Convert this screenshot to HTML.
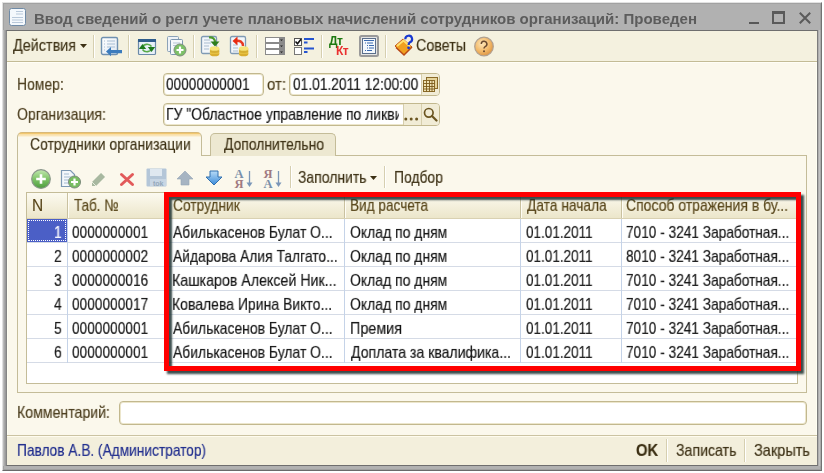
<!DOCTYPE html>
<html><head><meta charset="utf-8">
<style>
*{margin:0;padding:0;box-sizing:border-box}
html,body{width:824px;height:473px;overflow:hidden;background:#fff;position:relative;font-family:"Liberation Sans",sans-serif}
.a{position:absolute}
.t{position:absolute;font-size:15.5px;line-height:18px;transform-origin:0 14px;white-space:nowrap;color:#4a3c1c;will-change:transform}
.k{color:#1e1e1e}
.hd{color:#5a4818}
.box{position:absolute;background:#fff;border:1px solid #c2b88e;border-radius:4px;box-shadow:inset 0 0 0 1px #ece6cc}
.sep{position:absolute;width:1px;background:#d6cfb0;box-shadow:1px 0 0 #fff}
.vl{position:absolute;width:1px;background:#c5d3e8}
.hl{position:absolute;height:1px;background:#d5dbe6}
</style></head><body>
<!-- window frame -->
<div class="a" style="left:2px;top:2px;width:820px;height:469px;background:#b1b1b1;border-top:1px solid #e2e2e2;border-left:1px solid #e0e0e0;border-right:1px solid #727272;border-bottom:1px solid #6a6a6a;box-shadow:inset 1px 1px 0 #a2a2a2, inset -1px -1px 0 #a0a0a0"></div>
<div class="a" style="left:3px;top:30px;width:3px;height:436px;background:linear-gradient(to right,#c4c4c4,#a8a8a8,#939393)"></div>
<div class="a" style="left:818px;top:30px;width:3px;height:436px;background:linear-gradient(to right,#a4a4a4,#c2c2c2,#a0a0a0)"></div>
<!-- title icon -->
<svg class="a" style="left:9px;top:8px" width="17" height="18" viewBox="0 0 17 18">
<rect x="0.5" y="0.5" width="16" height="17" rx="2" fill="#f4f8fc" stroke="#6f8aa6"/>
<path d="M7 3.5h7M7 6h7M3 9.5h11M3 12h11M3 14.5h11" stroke="#b8c8da" stroke-width="1"/>
</svg>
<div class="a" style="left:34px;top:9.5px;font-size:15px;line-height:17px;font-weight:bold;color:#5c5c5c;white-space:nowrap;transform:scaleX(1.002);transform-origin:0 0;will-change:transform">Ввод сведений о регл учете плановых начислений сотрудников организаций: Проведен</div>
<!-- window buttons -->
<div class="a" style="left:749px;top:22px;width:10px;height:2px;background:#585858"></div>
<div class="a" style="left:772px;top:11px;width:13px;height:13px;border:2px solid #5a5a5a;border-top-width:3px"></div>
<svg class="a" style="left:798px;top:11px" width="14" height="14" viewBox="0 0 14 14"><path d="M1.8 1.8L12.2 12.2M12.2 1.8L1.8 12.2" stroke="#5a5a5a" stroke-width="2"/></svg>

<!-- client area -->
<div class="a" style="left:6px;top:30px;width:812px;height:436px;background:#fbf8ec;border:1px solid #6e6e6e;border-left-color:#858585;border-right-color:#7c7c7c;box-shadow:inset 1px 0 0 #fffff2, inset -1px 0 0 #fffff2"></div>
<!-- toolbar -->
<div class="a" style="left:7px;top:31px;width:810px;height:31px;background:#f4f1df;border-bottom:1px solid #c3bb95"></div>
<div class="a" style="left:7px;top:62px;width:810px;height:1px;background:#fffef6"></div>

<svg class="a" style="left:80px;top:44px" width="8" height="5"><path d="M0 0h7L3.5 4z" fill="#3c3014"/></svg>
<div class="sep" style="left:93px;top:35px;height:23px"></div>
<div class="sep" style="left:128px;top:35px;height:23px"></div>
<div class="sep" style="left:193px;top:35px;height:23px"></div>
<div class="sep" style="left:256px;top:35px;height:23px"></div>
<div class="sep" style="left:321px;top:35px;height:23px"></div>
<div class="sep" style="left:385px;top:35px;height:23px"></div>
<svg class="a" style="left:100px;top:36px" width="24" height="21" viewBox="0 0 24 21">
<defs><linearGradient id="dg" x1="0" y1="0" x2="1" y2="1"><stop offset="0" stop-color="#fff"/><stop offset="1" stop-color="#dfe8f2"/></linearGradient></defs>
<rect x="1.5" y="1.5" width="16" height="17" rx="1.5" fill="url(#dg)" stroke="#6f90b0" stroke-width="1.4"/>
<path d="M4 5h1M7 5h8M4 8h1M7 8h8M4 11h1M7 11h8M4 14h1" stroke="#a8bdd4" stroke-width="1.2"/>
<path d="M6 15.5L11 11v3h11v3.2H11v3z" fill="#3b7bbd"/>
</svg>
<svg class="a" style="left:137px;top:38px" width="20" height="18" viewBox="0 0 20 18">
<rect x="1.5" y="1.5" width="17" height="15" rx="1" fill="#e8f0f8" stroke="#6b8aa8" stroke-width="1.2"/>
<rect x="1" y="1" width="18" height="3" fill="#2f5d8c"/>
<path d="M5.5 9.5C6 6 12 5 14.5 8.5" fill="none" stroke="#58aa48" stroke-width="1.6"/>
<path d="M14.5 10.5C14 14 8 15 5.5 11.5" fill="none" stroke="#58aa48" stroke-width="1.6"/>
<path d="M1.8 11h7.4L5.5 6z" fill="#1f7a1f"/><path d="M10.8 9h7.4l-3.7 5z" fill="#1f7a1f"/>
</svg>
<svg class="a" style="left:166px;top:35px" width="21" height="22" viewBox="0 0 21 22">
<rect x="1.5" y="1.5" width="11" height="15" rx="1" fill="#eef2f7" stroke="#8ca2b8"/>
<rect x="4.5" y="4.5" width="12" height="15" rx="1" fill="#f6f8fb" stroke="#7c96b0"/>
<path d="M7 8h7M7 10.5h7" stroke="#b5c5d5"/>
<circle cx="14" cy="15" r="6" fill="#7cc066" stroke="#7d8f7d" stroke-width="1"/>
<path d="M14 11.5v7M10.5 15h7" stroke="#fff" stroke-width="2.2"/>
</svg>
<svg class="a" style="left:200px;top:35px" width="21" height="22" viewBox="0 0 21 22">
<rect x="1.5" y="1.5" width="15" height="17" rx="1.5" fill="#f2f6fa" stroke="#7f9ab4" stroke-width="1.3"/>
<path d="M4 5h6M4 8h7M4 11h5M4 14h5" stroke="#a9bccf"/>
<path d="M9 2.5c4 -0.5 6 1.5 6 5" fill="none" stroke="#4d9a2a" stroke-width="2.2"/>
<path d="M10.5 6.5h9l-4.5 5z" fill="#2c7d1c"/>
<ellipse cx="14.6" cy="19" rx="4.7" ry="2.3" fill="#d9ae30"/>
<rect x="9.9" y="13.5" width="9.4" height="5.5" fill="#e6c040"/>
<ellipse cx="14.6" cy="16.3" rx="4.7" ry="1.6" fill="#c9a22a" opacity=".6"/>
<ellipse cx="14.6" cy="13.5" rx="4.7" ry="2.3" fill="#f6e47a"/>
</svg>
<svg class="a" style="left:229px;top:35px" width="21" height="22" viewBox="0 0 21 22">
<rect x="1.5" y="1.5" width="15" height="17" rx="1.5" fill="#f2f6fa" stroke="#7f9ab4" stroke-width="1.3"/>
<path d="M4 10h4M4 13h5M4 16h5" stroke="#a9bccf"/>
<path d="M6 6c5-1 8 1 8 5" fill="none" stroke="#e83a20" stroke-width="2.4"/>
<path d="M3.5 6L8.5 1.5v9z" fill="#e82a10"/>
<ellipse cx="14.6" cy="19" rx="4.7" ry="2.3" fill="#d9ae30"/>
<rect x="9.9" y="13.5" width="9.4" height="5.5" fill="#e6c040"/>
<ellipse cx="14.6" cy="16.3" rx="4.7" ry="1.6" fill="#c9a22a" opacity=".6"/>
<ellipse cx="14.6" cy="13.5" rx="4.7" ry="2.3" fill="#f6e47a"/>
</svg>
<svg class="a" style="left:264px;top:36px" width="22" height="20" viewBox="0 0 22 20">
<g stroke="#8a8a8a" stroke-width="1"><rect x="1.5" y="1.5" width="19" height="5" fill="#fff"/><rect x="1.5" y="7.5" width="19" height="5" fill="#fff"/><rect x="1.5" y="13.5" width="19" height="5" fill="#fff"/></g>
<rect x="15" y="2" width="5" height="4" fill="#8c8c8c"/><rect x="15" y="8" width="5" height="4" fill="#8c8c8c"/><rect x="15" y="14" width="5" height="4" fill="#8c8c8c"/>
<path d="M16 3.5h3l-1.5 1.5zM16 9.5h3l-1.5 1.5zM16 15.5h3l-1.5 1.5z" fill="#222"/>
</svg>
<svg class="a" style="left:293px;top:36px" width="22" height="20" viewBox="0 0 22 20">
<rect x="1.5" y="2.5" width="7" height="7" fill="#fff" stroke="#555"/>
<path d="M2.5 5.5l2 2.2 3.5-4.5" fill="none" stroke="#111" stroke-width="1.6"/>
<rect x="1.5" y="11.5" width="7" height="7" fill="#fff" stroke="#777"/>
<path d="M11 3h10M11 6.5h3.5M11 12.5h10M11 16h3.5" stroke="#2554d0" stroke-width="2"/>
</svg>
<div class="a" style="left:329px;top:35px;font:bold 12px/12px 'Liberation Sans',sans-serif;color:#1e7a12;letter-spacing:-0.6px;will-change:transform">Дт</div>
<div class="a" style="left:336px;top:45px;font:bold 12px/12px 'Liberation Sans',sans-serif;color:#ea3030;letter-spacing:-0.6px;will-change:transform">Кт</div>
<svg class="a" style="left:359px;top:35px" width="20" height="22" viewBox="0 0 20 22">
<rect x="1" y="1" width="18" height="20" rx="1.5" fill="#e4e4e4" stroke="#9a9a9a" stroke-width="2"/>
<rect x="3.5" y="3.5" width="13" height="15" fill="#f4f8fc" stroke="#5b6f8c"/>
<path d="M5 5.5h10M6 8h1M8 8h6M8 10.5h1M10 10.5h5M8 13h1M10 13h5M6 15.5h1M8 15.5h5" stroke="#3a6ab0" stroke-width="1.2"/>
</svg>
<svg class="a" style="left:393px;top:34px" width="22" height="23" viewBox="0 0 22 23">
<path d="M2 12L10 5l9 8-8 8z" fill="#f0a020" stroke="#c0501a" stroke-width="1"/>
<path d="M3 13.5L11 21l8-8" fill="none" stroke="#b84818" stroke-width="1.5"/>
<path d="M4 12l6.5-5.5 6.5 6" fill="none" stroke="#ffe070" stroke-width="2"/>
<path d="M12.3 5.2a3.4 3.4 0 1 1 4.6 3.1c-1 .6-1.3 1.3-1.3 2.6" fill="none" stroke="#1838d0" stroke-width="2.2"/>
<circle cx="15.6" cy="13.8" r="1.4" fill="#1838d0"/>
</svg>
<svg class="a" style="left:473px;top:36px" width="22" height="21" viewBox="0 0 22 21">
<defs><radialGradient id="hg" cx=".4" cy=".35" r=".7"><stop offset="0" stop-color="#fde6b8"/><stop offset=".6" stop-color="#f2b868"/><stop offset="1" stop-color="#d99040"/></radialGradient></defs>
<circle cx="11" cy="10.5" r="9.3" fill="url(#hg)" stroke="#b0a090" stroke-width="1.2"/>
<path d="M8.3 8a2.8 2.8 0 1 1 3.9 2.6c-.8.5-1.2 1-1.2 2" fill="none" stroke="#6a4a30" stroke-width="1.5"/>
<circle cx="11" cy="15.3" r="1" fill="#6a4a30"/>
</svg>

<!-- footer -->
<div class="a" style="left:7px;top:435px;width:810px;height:1px;background:#cbc3a2"></div>
<div class="a" style="left:7px;top:436px;width:810px;height:29px;background:#f3efdc;border-top:1px solid #fffcee"></div>
<div class="sep" style="left:666px;top:439px;height:23px"></div>
<div class="sep" style="left:744px;top:439px;height:23px"></div>

<!-- form fields -->
<div class="box" style="left:163px;top:73px;width:101px;height:23px"></div>
<div class="box" style="left:289px;top:73px;width:151px;height:23px;overflow:hidden"><div class="a" style="left:131px;top:0;width:19px;height:21px;background:#f1ecd6;border-left:1px solid #d6ceac"></div></div>
<svg class="a" style="left:423px;top:77px" width="15" height="15" viewBox="0 0 15 15">
<rect x="3.5" y="0.5" width="11" height="11" fill="#e6d49a" stroke="#8a6a28"/>
<rect x="0.5" y="3.5" width="11" height="11" fill="#efe2b4" stroke="#8a6a28"/>
<path d="M0.5 6.5h11M0.5 9.5h11M0.5 12h11M3.5 3.5v11M6.5 3.5v11M9 3.5v11" stroke="#7a5a18" stroke-width=".9"/>
</svg>

<div class="box" style="left:163px;top:103px;width:277px;height:23px;overflow:hidden">
<div class="a" style="left:239px;top:0;width:18px;height:21px;background:#f1ecd6;border-left:1px solid #d6ceac"></div>
<div class="a" style="left:257px;top:0;width:19px;height:21px;background:#f1ecd6;border-left:1px solid #d6ceac"></div>
</div>
<svg class="a" style="left:404px;top:117px" width="15" height="4"><circle cx="1.8" cy="2" r="1.5" fill="#6a5420"/><circle cx="7.2" cy="2" r="1.5" fill="#6a5420"/><circle cx="12.6" cy="2" r="1.5" fill="#6a5420"/></svg>
<svg class="a" style="left:423px;top:107px" width="15" height="15" viewBox="0 0 15 15"><circle cx="5.8" cy="5.8" r="4.3" fill="none" stroke="#6a5420" stroke-width="1.7"/><path d="M9 9l4.5 4.5" stroke="#6a5420" stroke-width="2.2" stroke-linecap="round"/></svg>
<div class="a" style="left:164px;top:104px;width:235px;height:21px;overflow:hidden"><div class="t" style="left:2.40px;top:2.20px;color:#141414;transform:scale(0.9,1.08);-webkit-text-stroke:0.15px #141414">ГУ &quot;Областное управление по ликвидации</div></div>


<!-- tabs panel -->
<div class="a" style="left:17px;top:155px;width:790px;height:238px;border:1px solid #c4bc98"></div>
<div class="a" style="left:210px;top:133px;width:126px;height:23px;background:#ede8d1;border:1px solid #c4bc98;border-bottom:none;border-radius:5px 5px 0 0"></div>
<div class="a" style="left:17px;top:132px;width:185px;height:24px;background:linear-gradient(#f2c870 0,#f2c870 1px,#f8dca0 1px,#fae8c0 3px,#fbf8ec 4px);border:1px solid #c4bc98;border-bottom:none;border-top-color:#d8b878;border-radius:5px 5px 0 0"></div>

<svg class="a" style="left:30px;top:168px" width="22" height="22" viewBox="0 0 22 22">
<defs><linearGradient id="gg" x1="0" y1="0" x2="0" y2="1"><stop offset="0" stop-color="#c2e8b0"/><stop offset=".5" stop-color="#80c468"/><stop offset="1" stop-color="#4d9c3e"/></linearGradient></defs>
<circle cx="11" cy="11" r="9.3" fill="url(#gg)" stroke="#8a968a" stroke-width="1.2"/>
<path d="M11 6.2v9.6M6.2 11h9.6" stroke="#fff" stroke-width="2.6"/>
</svg>
<svg class="a" style="left:60px;top:169px" width="22" height="20" viewBox="0 0 22 20">
<path d="M1.5 1.5h9l4 4v12h-13z" fill="#f4f7fb" stroke="#7d98b4" stroke-width="1.2"/>
<path d="M4 5h5M4 8h7M4 11h5M4 14h4" stroke="#a5bad0"/>
<circle cx="14.5" cy="13" r="6" fill="#78bd62" stroke="#7a8a7a"/>
<path d="M14.5 9.5v7M11 13h7" stroke="#fff" stroke-width="2.2"/>
</svg>
<svg class="a" style="left:90px;top:171px" width="17" height="16" viewBox="0 0 17 16">
<path d="M2 11L11 2l4 4-9 9H2z" fill="#a8b8a0"/>
<path d="M2 11l4 4" stroke="#e8eee0" stroke-width="1"/>
<path d="M11 2l4 4" stroke="#c8d4c0" stroke-width="1"/>
</svg>
<svg class="a" style="left:119px;top:172px" width="16" height="15" viewBox="0 0 16 15">
<path d="M2.5 2.5l11 10M13.5 2.5l-11 10" stroke="#e25a5a" stroke-width="3" stroke-linecap="round"/>
</svg>
<svg class="a" style="left:146px;top:168px" width="21" height="19" viewBox="0 0 21 19">
<rect x="0.5" y="0.5" width="20" height="18" rx="1" fill="#b4c6d8"/>
<rect x="4" y="1" width="12" height="7" fill="#dfe8f0"/>
<rect x="4" y="11" width="16" height="7" fill="#c8d6e4"/>
<text x="7" y="18" font-family="Liberation Sans" font-size="7" font-weight="bold" fill="#95a8ba">tok</text>
</svg>
<svg class="a" style="left:176px;top:170px" width="18" height="16" viewBox="0 0 18 16">
<path d="M9 1L17 9h-4v6H5V9H1z" fill="#a6b4c2" stroke="#95a5b5" stroke-width=".6"/>
</svg>
<svg class="a" style="left:205px;top:170px" width="18" height="16" viewBox="0 0 18 16">
<defs><linearGradient id="bg2" x1="0" y1="0" x2="0" y2="1"><stop offset="0" stop-color="#b8dcf8"/><stop offset="1" stop-color="#3a8ad8"/></linearGradient></defs>
<path d="M5 1h8v6h4L9 15 1 7h4z" fill="url(#bg2)" stroke="#3070b0" stroke-width="1"/>
</svg>
<svg class="a" style="left:234px;top:169px" width="20" height="20" viewBox="0 0 20 20">
<text x="0.5" y="8.8" font-family="Liberation Serif" font-size="12.5" font-weight="bold" fill="#7a90aa">A</text>
<text x="0.5" y="19" font-family="Liberation Serif" font-size="12.5" font-weight="bold" fill="#a07a82">Я</text>
<path d="M15.5 2v13" stroke="#7a96b8" stroke-width="1.3"/><path d="M12.5 13.5h6l-3 4.5z" fill="#7a96b8"/>
</svg>
<svg class="a" style="left:263px;top:169px" width="20" height="20" viewBox="0 0 20 20">
<text x="0.5" y="8.8" font-family="Liberation Serif" font-size="12.5" font-weight="bold" fill="#a07a82">Я</text>
<text x="0.5" y="19" font-family="Liberation Serif" font-size="12.5" font-weight="bold" fill="#7a90aa">A</text>
<path d="M15.5 2v13" stroke="#7a96b8" stroke-width="1.3"/><path d="M12.5 13.5h6l-3 4.5z" fill="#7a96b8"/>
</svg>
<svg class="a" style="left:370px;top:176px" width="8" height="5"><path d="M0 0h7L3.5 4z" fill="#3c3014"/></svg>
<div class="sep" style="left:290px;top:166px;height:22px"></div>
<div class="sep" style="left:384px;top:166px;height:22px"></div>

<!-- table -->
<div class="a" style="left:26px;top:192px;width:772px;height:192px;background:#fff;border:1px solid #c4bc98"></div>
<div class="a" style="left:27px;top:193px;width:770px;height:26px;background:linear-gradient(#fcfaf0,#ebe5c9)"></div>
<div class="a" style="left:27px;top:218px;width:770px;height:1px;background:#d9d1b2"></div>
<div class="a" style="left:67px;top:193px;width:1px;height:25px;background:#c9c1a0"></div>
<div class="a" style="left:68px;top:193px;width:1px;height:25px;background:#fffdf5"></div>
<div class="a" style="left:167px;top:193px;width:1px;height:25px;background:#c9c1a0"></div>
<div class="a" style="left:168px;top:193px;width:1px;height:25px;background:#fffdf5"></div>
<div class="a" style="left:344px;top:193px;width:1px;height:25px;background:#c9c1a0"></div>
<div class="a" style="left:345px;top:193px;width:1px;height:25px;background:#fffdf5"></div>
<div class="a" style="left:520px;top:193px;width:1px;height:25px;background:#c9c1a0"></div>
<div class="a" style="left:521px;top:193px;width:1px;height:25px;background:#fffdf5"></div>
<div class="a" style="left:621px;top:193px;width:1px;height:25px;background:#c9c1a0"></div>
<div class="a" style="left:622px;top:193px;width:1px;height:25px;background:#fffdf5"></div>
<div class="hl" style="left:27px;top:242px;width:770px"></div>
<div class="hl" style="left:27px;top:266px;width:770px"></div>
<div class="hl" style="left:27px;top:290px;width:770px"></div>
<div class="hl" style="left:27px;top:314px;width:770px"></div>
<div class="hl" style="left:27px;top:338px;width:770px"></div>
<div class="hl" style="left:27px;top:362px;width:770px"></div>
<div class="vl" style="left:67px;top:219px;height:144px"></div>
<div class="vl" style="left:167px;top:219px;height:144px"></div>
<div class="vl" style="left:344px;top:219px;height:144px"></div>
<div class="vl" style="left:520px;top:219px;height:144px"></div>
<div class="vl" style="left:621px;top:219px;height:144px"></div>
<div class="a" style="left:27px;top:219px;width:40px;height:23px;background:#4b5fc6;outline:1px dotted #fff;outline-offset:-2px"></div>
<div class="t" style="left:13.10px;top:37.00px;color:#3c3014;font-weight:400;transform:scale(0.9284,1.08);-webkit-text-stroke:0.15px #3c3014;">Действия</div>
<div class="t" style="left:416.08px;top:36.50px;color:#3c3014;font-weight:400;transform:scale(0.9231,1.08);-webkit-text-stroke:0.15px #3c3014;">Советы</div>
<div class="t" style="left:17.10px;top:76.00px;color:#4a3c1c;font-weight:400;transform:scale(0.9000,1.08);-webkit-text-stroke:0.15px #4a3c1c;">Номер:</div>
<div class="t" style="left:166.42px;top:76.00px;color:#141414;font-weight:400;transform:scale(0.8817,1.08);-webkit-text-stroke:0.15px #141414;">00000000001</div>
<div class="t" style="left:267.44px;top:76.00px;color:#4a3c1c;font-weight:400;transform:scale(0.9647,1.08);-webkit-text-stroke:0.15px #4a3c1c;">от:</div>
<div class="t" style="left:292.51px;top:76.00px;color:#141414;font-weight:400;transform:scale(0.8879,1.08);-webkit-text-stroke:0.15px #141414;">01.01.2011 12:00:00</div>
<div class="t" style="left:16.59px;top:106.20px;color:#4a3c1c;font-weight:400;transform:scale(0.9095,1.08);-webkit-text-stroke:0.15px #4a3c1c;">Организация:</div>
<div class="t" style="left:29.80px;top:135.50px;color:#3c3014;font-weight:400;transform:scale(0.9000,1.08);-webkit-text-stroke:0.15px #3c3014;">Сотрудники организации</div>
<div class="t" style="left:223.80px;top:135.50px;color:#3c3014;font-weight:400;transform:scale(0.8964,1.08);-webkit-text-stroke:0.15px #3c3014;">Дополнительно</div>
<div class="t" style="left:298.10px;top:169.00px;color:#3c3014;font-weight:400;transform:scale(0.9000,1.08);-webkit-text-stroke:0.15px #3c3014;">Заполнить</div>
<div class="t" style="left:393.50px;top:169.00px;color:#3c3014;font-weight:400;transform:scale(0.8962,1.08);-webkit-text-stroke:0.15px #3c3014;">Подбор</div>
<div class="t" style="left:31.70px;top:197.10px;color:#58461a;font-weight:400;transform:scale(1.0000,1.08);-webkit-text-stroke:0.15px #58461a;">N</div>
<div class="t" style="left:74.00px;top:197.10px;color:#58461a;font-weight:400;transform:scale(0.8627,1.08);-webkit-text-stroke:0.15px #58461a;">Таб. №</div>
<div class="t" style="left:173.11px;top:197.10px;color:#58461a;font-weight:400;transform:scale(0.8878,1.08);-webkit-text-stroke:0.15px #58461a;">Сотрудник</div>
<div class="t" style="left:349.62px;top:197.10px;color:#58461a;font-weight:400;transform:scale(0.8784,1.08);-webkit-text-stroke:0.15px #58461a;">Вид расчета</div>
<div class="t" style="left:527.20px;top:197.10px;color:#58461a;font-weight:400;transform:scale(0.8867,1.08);-webkit-text-stroke:0.15px #58461a;">Дата начала</div>
<div class="t" style="left:626.40px;top:197.10px;color:#58461a;font-weight:400;transform:scale(0.9023,1.08);-webkit-text-stroke:0.15px #58461a;">Способ отражения в бу...</div>
<div class="t" style="left:16.59px;top:404.00px;color:#4a3c1c;font-weight:400;transform:scale(0.9121,1.08);-webkit-text-stroke:0.15px #4a3c1c;">Комментарий:</div>
<div class="t" style="left:16.62px;top:442.00px;color:#1c2a8c;font-weight:400;transform:scale(0.8844,1.08);-webkit-text-stroke:0.15px #1c2a8c;">Павлов А.В. (Администратор)</div>
<div class="t" style="left:636.35px;top:442.00px;color:#3a2e12;font-weight:700;transform:scale(0.9545,1.08);-webkit-text-stroke:0.15px #3a2e12;">OK</div>
<div class="t" style="left:676.09px;top:442.00px;color:#3a2e12;font-weight:400;transform:scale(0.9123,1.08);-webkit-text-stroke:0.15px #3a2e12;">Записать</div>
<div class="t" style="left:754.06px;top:442.00px;color:#3a2e12;font-weight:400;transform:scale(0.9379,1.08);-webkit-text-stroke:0.15px #3a2e12;">Закрыть</div>
<div class="t" style="left:71.92px;top:223.50px;color:#141414;font-weight:400;transform:scale(0.8845,1.08);-webkit-text-stroke:0.15px #141414;">0000000001</div>
<div class="t" style="left:173.00px;top:223.50px;color:#141414;font-weight:400;transform:scale(0.8977,1.08);-webkit-text-stroke:0.15px #141414;">Абилькасенов Булат О...</div>
<div class="t" style="left:349.60px;top:223.50px;color:#141414;font-weight:400;transform:scale(0.9009,1.08);-webkit-text-stroke:0.15px #141414;">Оклад по дням</div>
<div class="t" style="left:526.33px;top:223.50px;color:#141414;font-weight:400;transform:scale(0.8720,1.08);-webkit-text-stroke:0.15px #141414;">01.01.2011</div>
<div class="t" style="left:626.42px;top:223.50px;color:#141414;font-weight:400;transform:scale(0.8820,1.08);-webkit-text-stroke:0.15px #141414;">7010 - 3241 Заработная...</div>
<div class="t" style="left:71.92px;top:247.50px;color:#141414;font-weight:400;transform:scale(0.8845,1.08);-webkit-text-stroke:0.15px #141414;">0000000002</div>
<div class="t" style="left:173.00px;top:247.50px;color:#141414;font-weight:400;transform:scale(0.8945,1.08);-webkit-text-stroke:0.15px #141414;">Айдарова Алия Талгато...</div>
<div class="t" style="left:349.60px;top:247.50px;color:#141414;font-weight:400;transform:scale(0.9009,1.08);-webkit-text-stroke:0.15px #141414;">Оклад по дням</div>
<div class="t" style="left:526.33px;top:247.50px;color:#141414;font-weight:400;transform:scale(0.8720,1.08);-webkit-text-stroke:0.15px #141414;">01.01.2011</div>
<div class="t" style="left:626.42px;top:247.50px;color:#141414;font-weight:400;transform:scale(0.8820,1.08);-webkit-text-stroke:0.15px #141414;">8010 - 3241 Заработная...</div>
<div class="t" style="left:71.92px;top:271.50px;color:#141414;font-weight:400;transform:scale(0.8845,1.08);-webkit-text-stroke:0.15px #141414;">0000000016</div>
<div class="t" style="left:172.08px;top:271.50px;color:#141414;font-weight:400;transform:scale(0.9169,1.08);-webkit-text-stroke:0.15px #141414;">Кашкаров Алексей Ник...</div>
<div class="t" style="left:349.60px;top:271.50px;color:#141414;font-weight:400;transform:scale(0.9009,1.08);-webkit-text-stroke:0.15px #141414;">Оклад по дням</div>
<div class="t" style="left:526.33px;top:271.50px;color:#141414;font-weight:400;transform:scale(0.8720,1.08);-webkit-text-stroke:0.15px #141414;">01.01.2011</div>
<div class="t" style="left:626.42px;top:271.50px;color:#141414;font-weight:400;transform:scale(0.8820,1.08);-webkit-text-stroke:0.15px #141414;">7010 - 3241 Заработная...</div>
<div class="t" style="left:71.92px;top:295.50px;color:#141414;font-weight:400;transform:scale(0.8845,1.08);-webkit-text-stroke:0.15px #141414;">0000000017</div>
<div class="t" style="left:172.10px;top:295.50px;color:#141414;font-weight:400;transform:scale(0.9029,1.08);-webkit-text-stroke:0.15px #141414;">Ковалева Ирина Викто...</div>
<div class="t" style="left:349.60px;top:295.50px;color:#141414;font-weight:400;transform:scale(0.9009,1.08);-webkit-text-stroke:0.15px #141414;">Оклад по дням</div>
<div class="t" style="left:526.33px;top:295.50px;color:#141414;font-weight:400;transform:scale(0.8720,1.08);-webkit-text-stroke:0.15px #141414;">01.01.2011</div>
<div class="t" style="left:626.42px;top:295.50px;color:#141414;font-weight:400;transform:scale(0.8820,1.08);-webkit-text-stroke:0.15px #141414;">7010 - 3241 Заработная...</div>
<div class="t" style="left:71.92px;top:319.50px;color:#141414;font-weight:400;transform:scale(0.8845,1.08);-webkit-text-stroke:0.15px #141414;">0000000001</div>
<div class="t" style="left:173.00px;top:319.50px;color:#141414;font-weight:400;transform:scale(0.8977,1.08);-webkit-text-stroke:0.15px #141414;">Абилькасенов Булат О...</div>
<div class="t" style="left:349.57px;top:319.50px;color:#141414;font-weight:400;transform:scale(0.9259,1.08);-webkit-text-stroke:0.15px #141414;">Премия</div>
<div class="t" style="left:526.33px;top:319.50px;color:#141414;font-weight:400;transform:scale(0.8720,1.08);-webkit-text-stroke:0.15px #141414;">01.01.2011</div>
<div class="t" style="left:626.42px;top:319.50px;color:#141414;font-weight:400;transform:scale(0.8820,1.08);-webkit-text-stroke:0.15px #141414;">7010 - 3241 Заработная...</div>
<div class="t" style="left:71.92px;top:343.50px;color:#141414;font-weight:400;transform:scale(0.8845,1.08);-webkit-text-stroke:0.15px #141414;">0000000001</div>
<div class="t" style="left:173.00px;top:343.50px;color:#141414;font-weight:400;transform:scale(0.8977,1.08);-webkit-text-stroke:0.15px #141414;">Абилькасенов Булат О...</div>
<div class="t" style="left:350.50px;top:343.50px;color:#141414;font-weight:400;transform:scale(0.9086,1.08);-webkit-text-stroke:0.15px #141414;">Доплата за квалифика...</div>
<div class="t" style="left:526.33px;top:343.50px;color:#141414;font-weight:400;transform:scale(0.8720,1.08);-webkit-text-stroke:0.15px #141414;">01.01.2011</div>
<div class="t" style="left:626.42px;top:343.50px;color:#141414;font-weight:400;transform:scale(0.8820,1.08);-webkit-text-stroke:0.15px #141414;">7010 - 3241 Заработная...</div>
<div class="t" style="left:53.80px;top:223.50px;color:#fff;transform:scale(0.9,1.08);-webkit-text-stroke:0.15px #fff">1</div>
<div class="t" style="left:53.80px;top:247.50px;color:#141414;transform:scale(0.9,1.08);-webkit-text-stroke:0.15px #141414">2</div>
<div class="t" style="left:53.80px;top:271.50px;color:#141414;transform:scale(0.9,1.08);-webkit-text-stroke:0.15px #141414">3</div>
<div class="t" style="left:53.80px;top:295.50px;color:#141414;transform:scale(0.9,1.08);-webkit-text-stroke:0.15px #141414">4</div>
<div class="t" style="left:53.80px;top:319.50px;color:#141414;transform:scale(0.9,1.08);-webkit-text-stroke:0.15px #141414">5</div>
<div class="t" style="left:53.80px;top:343.50px;color:#141414;transform:scale(0.9,1.08);-webkit-text-stroke:0.15px #141414">6</div>
<div class="a" style="left:164px;top:192px;width:637px;height:179px;border:5.5px solid #f00;box-shadow:3px 3px 2px rgba(25,45,45,.85), inset 3px 3px 2px rgba(25,45,45,.85)"></div>

<div class="comment-placeholder"></div>
<div class="box" style="left:119px;top:401px;width:688px;height:24px"></div>
</body></html>
